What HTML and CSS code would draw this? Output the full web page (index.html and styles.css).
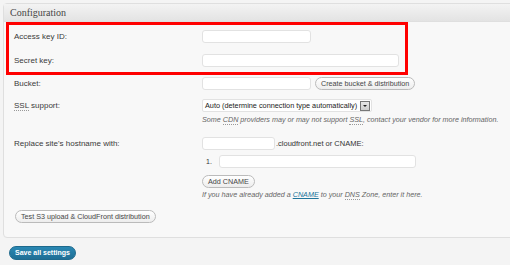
FILE: index.html
```html
<!DOCTYPE html>
<html>
<head>
<meta charset="utf-8">
<link rel="stylesheet" href="styles.css">
</head>
<body>
<div class="page">
  <div class="panel">
    <div class="panel-head">Configuration</div>
    <div class="row r1">
      <div class="label">Access key ID:</div>
      <div class="field"><span class="input w110"></span></div>
    </div>
    <div class="row r2">
      <div class="label">Secret key:</div>
      <div class="field"><span class="input w198"></span></div>
    </div>
    <div class="row r3">
      <div class="label">Bucket:</div>
      <div class="field inline"><span class="input w110"></span><span class="btn">Create bucket &amp; distribution</span></div>
    </div>
    <div class="row r4">
      <div class="label"><abbr>SSL</abbr> support:</div>
      <div class="field">
        <span class="select">Auto (determine connection type automatically)<span class="arrow"></span></span>
        <p class="note">Some <abbr>CDN</abbr> providers may or may not support <abbr>SSL</abbr>, contact your vendor for more information.</p>
      </div>
    </div>
    <div class="row r5">
      <div class="label">Replace site's hostname with:</div>
      <div class="field">
        <div class="inline"><span class="input w74"></span><span class="suffix">.cloudfront.net or CNAME:</span></div>
        <div class="inline sub"><span class="num">1.</span><span class="input w198"></span></div>
        <div class="inline addrow"><span class="btn">Add CNAME</span></div>
        <p class="note">If you have already added a <a class="link">CNAME</a> to your <abbr>DNS</abbr> Zone, enter it here.</p>
      </div>
    </div>
    <div class="test-row"><span class="btn">Test S3 upload &amp; CloudFront distribution</span></div>
    <div class="highlight"></div>
  </div>
  <div class="save-row"><span class="btn-primary">Save all settings</span></div>
</div>
</body>
</html>
```
FILE: styles.css
```css
html, body { margin: 0; padding: 0; }
body {
  background: #f4f4f4;
  font-family: "Liberation Sans", Arial, sans-serif;
  color: #333;
  overflow: hidden;
  width: 510px;
  height: 265px;
}
.page { padding: 3px 0 0 3px; }
.panel {
  position: relative;
  width: 530px;
  background: #f8f8f8;
  border: 1px solid #dfdfdf;
  border-radius: 4px 0 0 4px;
  padding-bottom: 14px;
}
.panel-head {
  height: 17px;
  line-height: 17px;
  padding-left: 6px;
  font-family: "Liberation Serif", Georgia, serif;
  font-size: 10px;
  color: #464646;
  background: linear-gradient(#f3f3f3, #e3e3e3);
  border-bottom: 1px solid #dfdfdf;
}
.row { display: flex; }
.r1 { padding-top: 8px; }
.r2 { padding-top: 11px; }
.r3 { padding-top: 10px; }
.r4 { padding-top: 9px; }
.r5 { padding-top: 13px; }
.label {
  width: 188px;
  padding-left: 10px;
  font-size: 8px;
  line-height: 13px;
  color: #3a3a3a;
  flex: none;
}
.field { font-size: 8px; }
.inline { display: flex; align-items: center; }
.input {
  display: block;
  height: 11px;
  background: #fff;
  border: 1px solid #e2e2e2;
  border-radius: 3px;
  flex: none;
}
.w110 { width: 107px; }
.w198 { width: 195px; }
.w74 { width: 71px; }
.btn {
  display: inline-block;
  height: 11px;
  line-height: 11px;
  padding: 0 5px;
  font-size: 7.2px;
  color: #464646;
  background: linear-gradient(#fff, #ededed);
  border: 1px solid #bbb;
  border-radius: 7px;
  white-space: nowrap;
}
.r3 .btn { margin-left: 4px; }
.select {
  display: inline-flex;
  align-items: center;
  height: 11px;
  line-height: 11px;
  padding-left: 2px;
  font-size: 7.3px;
  color: #222;
  background: #fff;
  border: 1px solid #e2e2e2;
  border-radius: 2px;
}
.arrow {
  position: relative;
  display: inline-block;
  width: 8px;
  height: 8px;
  margin-left: 3px;
  margin-right: 1px;
  background: linear-gradient(#e8e8e8, #cfcfcf);
  border: 1px solid #777;
}
.arrow::after {
  content: "";
  position: absolute;
  left: 2px;
  top: 3px;
  border-left: 2px solid transparent;
  border-right: 2px solid transparent;
  border-top: 2px solid #222;
}
.note {
  margin: 3px 0 0;
  font-size: 7.2px;
  line-height: 9px;
  font-style: italic;
  color: #666;
  white-space: nowrap;
}
abbr {
  text-decoration: none;
  border-bottom: 1px dotted #999;
}
.link { color: #21759b; text-decoration: underline; }
.suffix { font-size: 7.5px; color: #333; margin-left: 1px; }
.sub { margin-top: 5px; }
.num { width: 17px; padding-left: 4px; box-sizing: border-box; font-size: 7px; color: #333; }
.addrow { margin-top: 7px; }
.addrow + .note { margin-top: 2px; }
.test-row { display: flex; padding: 11px 0 0 11px; }
.highlight {
  position: absolute;
  left: 2px;
  top: 18px;
  width: 396px;
  height: 47px;
  border: 3px solid #f00;
}
.save-row { display: flex; padding: 8px 0 0 6px; }
.btn-primary {
  display: inline-block;
  height: 12px;
  line-height: 12px;
  padding: 0 5px;
  font-size: 7px;
  font-weight: bold;
  color: #fff;
  background: linear-gradient(#2a88b3, #1f6f95);
  border: 1px solid #1e6a8d;
  border-radius: 8px;
}
```
